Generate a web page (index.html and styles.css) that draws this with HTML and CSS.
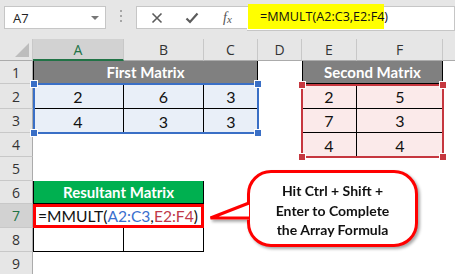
FILE: index.html
```html
<!DOCTYPE html>
<html lang="en">

<head>
    <meta charset="UTF-8">
    <title>MMULT</title>
    <link rel="stylesheet" href="styles.css">
</head>

<body>
    <div class="app">
        <div class="formula-bar">
            <div class="name-box">
                <span>A7</span>
                <span class="caret"></span>
            </div>
            <div class="grip"><i></i><i></i><i></i></div>
            <div class="fx-box">
                <svg class="ico" width="12" height="12" viewBox="0 0 12 12">
                    <path d="M1.5 1.5 L10.5 10.5 M10.5 1.5 L1.5 10.5" stroke="#5b5b5b" stroke-width="1.6" fill="none" />
                </svg>
                <svg class="ico" width="14" height="12" viewBox="0 0 14 12">
                    <path d="M1.5 6.5 L5 10 L12.5 1.5" stroke="#5b5b5b" stroke-width="2.2" fill="none" />
                </svg>
                <span class="fx">f<sub>x</sub></span>
            </div>
            <div class="formula-input">
                <span class="hl">=MMULT(A2:C3,E2:F4)</span>
            </div>
        </div>

        <div class="sheet">
            <!-- column headers -->
            <div class="corner"><span></span></div>
            <div class="ch sel">A</div>
            <div class="ch">B</div>
            <div class="ch">C</div>
            <div class="ch">D</div>
            <div class="ch">E</div>
            <div class="ch">F</div>
            <div class="ch"></div>

            <!-- row 1 -->
            <div class="rh">1</div>
            <div class="c span3 head gray">First Matrix</div>
            <div class="c"></div>
            <div class="c span2 head gray edge">Second Matrix</div>
            <div class="c"></div>

            <!-- row 2 -->
            <div class="rh">2</div>
            <div class="c num m1 br bb">2</div>
            <div class="c num m1 br bb">6</div>
            <div class="c num m1 bb">3</div>
            <div class="c"></div>
            <div class="c num m2 br bb">2</div>
            <div class="c num m2 bb">5</div>
            <div class="c"></div>

            <!-- row 3 -->
            <div class="rh">3</div>
            <div class="c num m1 br">4</div>
            <div class="c num m1 br">3</div>
            <div class="c num m1">3</div>
            <div class="c"></div>
            <div class="c num m2 br bb">7</div>
            <div class="c num m2 bb">3</div>
            <div class="c"></div>

            <!-- row 4 -->
            <div class="rh">4</div>
            <div class="c"></div>
            <div class="c"></div>
            <div class="c"></div>
            <div class="c"></div>
            <div class="c num m2 br">4</div>
            <div class="c num m2">4</div>
            <div class="c"></div>

            <!-- row 5 -->
            <div class="rh">5</div>
            <div class="c"></div>
            <div class="c"></div>
            <div class="c"></div>
            <div class="c"></div>
            <div class="c"></div>
            <div class="c"></div>
            <div class="c"></div>

            <!-- row 6 -->
            <div class="rh">6</div>
            <div class="c span2 head green">Resultant Matrix</div>
            <div class="c"></div>
            <div class="c"></div>
            <div class="c"></div>
            <div class="c"></div>
            <div class="c"></div>

            <!-- row 7 -->
            <div class="rh sel">7</div>
            <div class="c span2 formula">=MMULT(<span class="ref-a">A2:C3</span>,<span class="ref-b">E2:F4</span>)</div>
            <div class="c"></div>
            <div class="c"></div>
            <div class="c"></div>
            <div class="c"></div>
            <div class="c"></div>

            <!-- row 8 -->
            <div class="rh">8</div>
            <div class="c bl br bb"></div>
            <div class="c br bb"></div>
            <div class="c"></div>
            <div class="c"></div>
            <div class="c"></div>
            <div class="c"></div>
            <div class="c"></div>

            <!-- row 9 -->
            <div class="rh">9</div>
            <div class="c"></div>
            <div class="c"></div>
            <div class="c"></div>
            <div class="c"></div>
            <div class="c"></div>
            <div class="c"></div>
            <div class="c"></div>

            <!-- reference highlights -->
            <div class="range range-a">
                <span class="knob tl"></span><span class="knob tr"></span>
                <span class="knob bl"></span><span class="knob br"></span>
            </div>
            <div class="range range-b">
                <span class="knob tl"></span><span class="knob tr"></span>
                <span class="knob bl"></span><span class="knob br"></span>
            </div>

            <!-- callout -->
            <div class="callout">
                <svg class="pointer" width="42" height="22" viewBox="0 0 42 22">
                    <polygon points="0,19.5 40,4 40,19.5" fill="#fff" />
                    <polyline points="40,3 1.5,18 40,18" stroke="#ff0000" stroke-width="3" fill="none" stroke-linejoin="miter" />
                </svg>
                <div class="bubble">Hit Ctrl + Shift +<br>Enter to Complete<br>the Array Formula</div>
            </div>
        </div>
    </div>
</body>

</html>
```

FILE: styles.css
```css
body {
    margin: 0;
    background-color: #ffffff;
    overflow: hidden;
    font-family: 'Open Sans', sans-serif;
}

.app {
    --hdr-bg: #e6e6e6;
    --hdr-line: #c8c8c8;
    --hdr-sel: #d2d2d2;
    --xl-green: #217346;
    width: 455px;
    height: 274px;
    overflow: hidden;
}

/* ---------- formula bar ---------- */

.formula-bar {
    display: flex;
    align-items: flex-start;
    height: 39px;
    padding-top: 6px;
    box-sizing: border-box;
    background-color: var(--hdr-bg);
}

.name-box {
    display: flex;
    align-items: center;
    justify-content: space-between;
    width: 102px;
    height: 23px;
    margin-left: 4px;
    padding: 0 6px 0 8px;
    box-sizing: border-box;
    background-color: #fff;
    border: 1px solid #c6c6c6;
    font-size: 13px;
    color: #222;
}

.caret {
    width: 0;
    height: 0;
    border-left: 4px solid transparent;
    border-right: 4px solid transparent;
    border-top: 4px solid #777;
}

.grip {
    display: flex;
    flex-direction: column;
    gap: 3px;
    width: 30px;
    align-items: center;
    padding-top: 4px;
}

.grip i {
    width: 2px;
    height: 2px;
    background-color: #a6a6a6;
}

.fx-box {
    display: flex;
    align-items: center;
    gap: 22px;
    width: 111px;
    height: 23px;
    padding-left: 14px;
    box-sizing: border-box;
    background-color: #fff;
    border: 1px solid #c6c6c6;
    border-right: none;
}

.fx {
    font-family: 'Liberation Serif', serif;
    font-style: italic;
    font-size: 14px;
    color: #555;
    margin-left: 2px;
}

.fx sub {
    font-size: 11px;
    vertical-align: -1px;
}

.formula-input {
    flex: 1;
    height: 23px;
    background-color: #fff;
    border: 1px solid #c6c6c6;
    border-left: none;
    position: relative;
}

.hl {
    position: absolute;
    left: 1px;
    top: -3px;
    width: 136px;
    height: 25px;
    box-sizing: border-box;
    padding-left: 12px;
    background-color: #ffff00;
    font-size: 12.6px;
    line-height: 25px;
    color: #111;
}

/* ---------- sheet grid ---------- */

.sheet {
    position: relative;
    display: grid;
    grid-template-columns: 33px 91px 80px 54px 44px 55px 86px 60px;
    grid-template-rows: 22px 23px 25px 24px 24px 24px 23px 24px 24px 24px;
    font-family: 'Lato', sans-serif;
}

.corner {
    position: relative;
    background-color: var(--hdr-bg);
    border-right: 1px solid var(--hdr-line);
    border-bottom: 1px solid #ababab;
}

.corner span {
    position: absolute;
    right: 3px;
    bottom: 3px;
    width: 0;
    height: 0;
    border-left: 14px solid transparent;
    border-bottom: 14px solid #bdbdbd;
}

.ch {
    display: flex;
    align-items: center;
    justify-content: center;
    background-color: var(--hdr-bg);
    border-right: 1px solid var(--hdr-line);
    border-bottom: 1px solid #ababab;
    font-family: 'Open Sans', sans-serif;
    font-size: 14px;
    color: #333;
}

.ch.sel {
    background-color: var(--hdr-sel);
    border-bottom: 2px solid var(--xl-green);
    color: var(--xl-green);
}

.rh {
    display: flex;
    align-items: center;
    justify-content: center;
    background-color: var(--hdr-bg);
    border-right: 1px solid #ababab;
    border-bottom: 1px solid var(--hdr-line);
    font-family: 'Open Sans', sans-serif;
    font-size: 14px;
    color: #333;
}

.rh.sel {
    background-color: var(--hdr-sel);
    color: var(--xl-green);
}

.c {
    display: flex;
    align-items: center;
    justify-content: center;
    box-sizing: border-box;
    min-width: 0;
}

.span2 {
    grid-column: span 2;
}

.span3 {
    grid-column: span 3;
}

.head {
    font-weight: 700;
    font-size: 15px;
    color: #fff;
    border: 1px solid #000;
    border-top: none;
}

.gray {
    background-color: #808080;
}

.green {
    background-color: #00b050;
}

.num {
    font-size: 16px;
    color: #111;
}

.m1 {
    background-color: #e9eff8;
}

.m2 {
    background-color: #fbeaea;
}

.br {
    border-right: 1px solid #000;
}

.bb {
    border-bottom: 1px solid #000;
}

.bl {
    border-left: 1px solid #000;
}

.formula {
    justify-content: flex-start;
    padding-left: 2px;
    border: 3px solid #ff0000;
    font-size: 15.6px;
    color: #111;
    white-space: nowrap;
}

.ref-a {
    color: #3b6fce;
}

.ref-b {
    color: #c0394a;
}

/* ---------- reference highlights ---------- */

.range {
    position: absolute;
    box-sizing: border-box;
    border: 2px solid;
}

.range-a {
    left: 33px;
    top: 44px;
    width: 226px;
    height: 51px;
    border-color: #3a6fc6;
    color: #3a6fc6;
}

.range-b {
    left: 301px;
    top: 45px;
    width: 143px;
    height: 74px;
    border-color: #c6373f;
    color: #c6373f;
}

.knob {
    position: absolute;
    width: 6px;
    height: 6px;
    background-color: currentColor;
    border: 1px solid #fff;
}

.knob.tl { left: -5px; top: -5px; }
.knob.tr { right: -5px; top: -5px; }
.knob.bl { left: -5px; bottom: -5px; }
.knob.br { right: -5px; bottom: -5px; }

/* ---------- callout ---------- */

.callout {
    position: absolute;
    left: 209px;
    top: 131px;
    filter: drop-shadow(2px 2px 1.5px rgba(0, 0, 0, 0.35));
}

.bubble {
    margin-left: 38px;
    width: 171px;
    height: 77px;
    box-sizing: border-box;
    padding-top: 8px;
    border: 3px solid #ff0000;
    border-radius: 24px;
    background-color: #fff;
    font-weight: 700;
    font-size: 14px;
    line-height: 19.5px;
    text-align: center;
    color: #111;
}

.pointer {
    position: absolute;
    left: 0;
    top: 30px;
}
```
